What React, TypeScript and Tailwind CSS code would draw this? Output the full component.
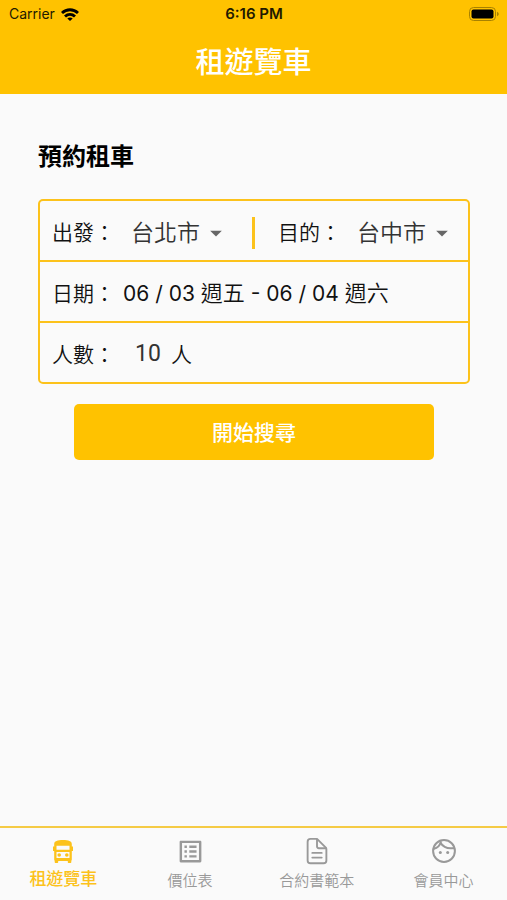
import { useState } from 'react'
import type { ReactNode } from 'react'
import { MdArrowDropDown, MdOutlineListAlt } from 'react-icons/md'
import { IoDocumentTextOutline } from 'react-icons/io5'

const cities = ['台北市', '台中市', '台南市', '高雄市']

function StatusBar() {
  return (
    <div className="grid h-7 grid-cols-3 items-center pr-2 pl-[9px] text-sm text-[#221a00]">
      <div className="flex items-center gap-1.5">
        <span>Carrier</span>
        <svg viewBox="0 0 18 13" className="h-[13px] w-[18px]" fill="none" stroke="#000" strokeWidth="2.9">
          <path d="M1 5C5.6.7 12.4.7 17 5" />
          <path d="M4 8.5c2.9-2.7 7.1-2.7 10 0" />
          <path d="M9 13 6.3 10.6c1.5-1.4 3.9-1.4 5.4 0z" fill="#000" stroke="none" />
        </svg>
      </div>
      <span className="text-center text-[15px] font-semibold">6:16 PM</span>
      <svg viewBox="0 0 30 14" className="h-3.5 w-[30px] justify-self-end">
        <rect x="0.5" y="0.5" width="26" height="13" rx="4" fill="none" stroke="#a88100" />
        <rect x="2.5" y="2.5" width="22" height="9" rx="2" fill="#000" />
        <path d="M28 4.8c2.3.8 2.3 3.6 0 4.4z" fill="#a88100" />
      </svg>
    </div>
  )
}

function BusIcon() {
  return (
    <svg viewBox="0 0 20 23" className="h-[23px] w-5" fill="currentColor">
      <path
        fillRule="evenodd"
        d="M10 0c5.500 0 8.800 1 8.800 4v2.500H20V11h-1.200v8.500c0 .5-.2.900-.5 1.200V22c0 .6-.4 1-1 1h-1.500c-.6 0-1-.4-1-1v-1H5.200v1c0 .6-.4 1-1 1H2.700c-.6 0-1-.4-1-1v-1.300c-.3-.3-.5-.7-.5-1.200V11H0V6.500h1.200V4C1.200 1 4.500 0 10 0zM3.500 5.800V9.800h13V5.800zM3.500 12V18h13v-6z"
      />
      <circle cx="6.200" cy="15" r="1.800" />
      <circle cx="13.800" cy="15" r="1.800" />
    </svg>
  )
}

function FaceIcon() {
  return (
    <svg viewBox="0 0 24 24" className="size-6" fill="none" stroke="currentColor" strokeWidth="2">
      <circle cx="12" cy="12" r="10.9" />
      <path d="M1.800 9.800C5.500 9 8 6.300 9 2.200" />
      <path d="M8.300 3.600c2.800 4.200 7.800 6.500 13.700 5.300" />
      <circle cx="8.300" cy="13.400" r="1.500" fill="currentColor" stroke="none" />
      <circle cx="15.700" cy="13.400" r="1.500" fill="currentColor" stroke="none" />
    </svg>
  )
}

function CitySelect({ id, label, initial }: { id: string; label: string; initial: string }) {
  const [city, setCity] = useState(initial)
  return (
    <div className="flex items-center gap-4">
      <label htmlFor={id}>{label}</label>
      <div className="relative flex items-center">
        <select
          id={id}
          value={city}
          onChange={(e) => setCity(e.target.value)}
          className="appearance-none bg-transparent pr-7 text-[23px] leading-8 font-[350] text-[#333]"
        >
          {cities.map((c) => (
            <option key={c}>{c}</option>
          ))}
        </select>
        <MdArrowDropDown className="pointer-events-none absolute -right-0.5 size-7 text-[#666]" />
      </div>
    </div>
  )
}

function NavItem({ icon, label, active = false }: { icon: ReactNode; label: string; active?: boolean }) {
  return (
    <a
      href="#"
      aria-current={active ? 'page' : undefined}
      className={
        active
          ? 'flex flex-1 flex-col items-center text-[17px] leading-7 font-medium text-[#fcc21b]'
          : 'flex flex-1 flex-col items-center text-[15px] leading-8 font-[350] text-[#999]'
      }
    >
      <span className="flex h-7 items-center">{icon}</span>
      <span>{label}</span>
    </a>
  )
}

export default function App() {
  const [people, setPeople] = useState('10')

  return (
    <div className="flex min-h-screen flex-col bg-[#fafafa] font-['Inter','Noto_Sans_CJK_TC',sans-serif] text-[#111]">
      <header className="bg-[#ffc200]">
        <StatusBar />
        <h1 className="pt-2 pb-1 text-center text-[29px] leading-[54px] font-medium text-white">租遊覽車</h1>
      </header>

      <main className="flex-1 pt-[45px] pr-[37px] pl-[38px]">
        <h2 className="text-2xl leading-9 font-bold text-black">預約租車</h2>

        <form className="mt-6" onSubmit={(e) => e.preventDefault()}>
          <div className="divide-y-2 divide-[#fcc21b] rounded-[5px] border-2 border-[#fcc21b] text-[21px] font-[350]">
            <div className="flex h-[61px] items-center justify-between pt-1 pr-3.5 pl-3">
              <CitySelect id="from" label="出發：" initial="台北市" />
              <div className="h-8 w-[3px] bg-[#fcc21b]" />
              <CitySelect id="to" label="目的：" initial="台中市" />
            </div>
            <div className="flex h-[61px] items-center gap-2 pt-1 pl-3">
              <span id="date-label">日期：</span>
              <button type="button" aria-describedby="date-label" className="font-normal">
                06 / 03 <span className="text-[22px] font-[350]">週五</span> - 06 / 04{' '}
                <span className="text-[22px] font-[350]">週六</span>
              </button>
            </div>
            <div className="flex h-[59px] items-center pt-1 pl-3">
              <label htmlFor="people">人數：</label>
              <input
                id="people"
                inputMode="numeric"
                value={people}
                onChange={(e) => setPeople(e.target.value)}
                className="ml-5 w-9 bg-transparent font-['Roboto','Noto_Sans_CJK_TC',sans-serif] text-[23px] font-normal text-[#333]"
              />
              <span>人</span>
            </div>
          </div>

          <div className="px-9 pt-5">
            <button type="submit" className="h-14 w-full rounded-[5px] bg-[#ffc200] pt-0.5 text-[21px] font-medium text-white">
              開始搜尋
            </button>
          </div>
        </form>
      </main>

      <nav className="flex h-[74px] border-t-2 border-[#f5cb45] pt-[9px]">
        <NavItem active label="租遊覽車" icon={<BusIcon />} />
        <NavItem label="價位表" icon={<MdOutlineListAlt className="size-[29px]" />} />
        <NavItem label="合約書範本" icon={<IoDocumentTextOutline className="size-[30px]" />} />
        <NavItem label="會員中心" icon={<FaceIcon />} />
      </nav>
    </div>
  )
}
